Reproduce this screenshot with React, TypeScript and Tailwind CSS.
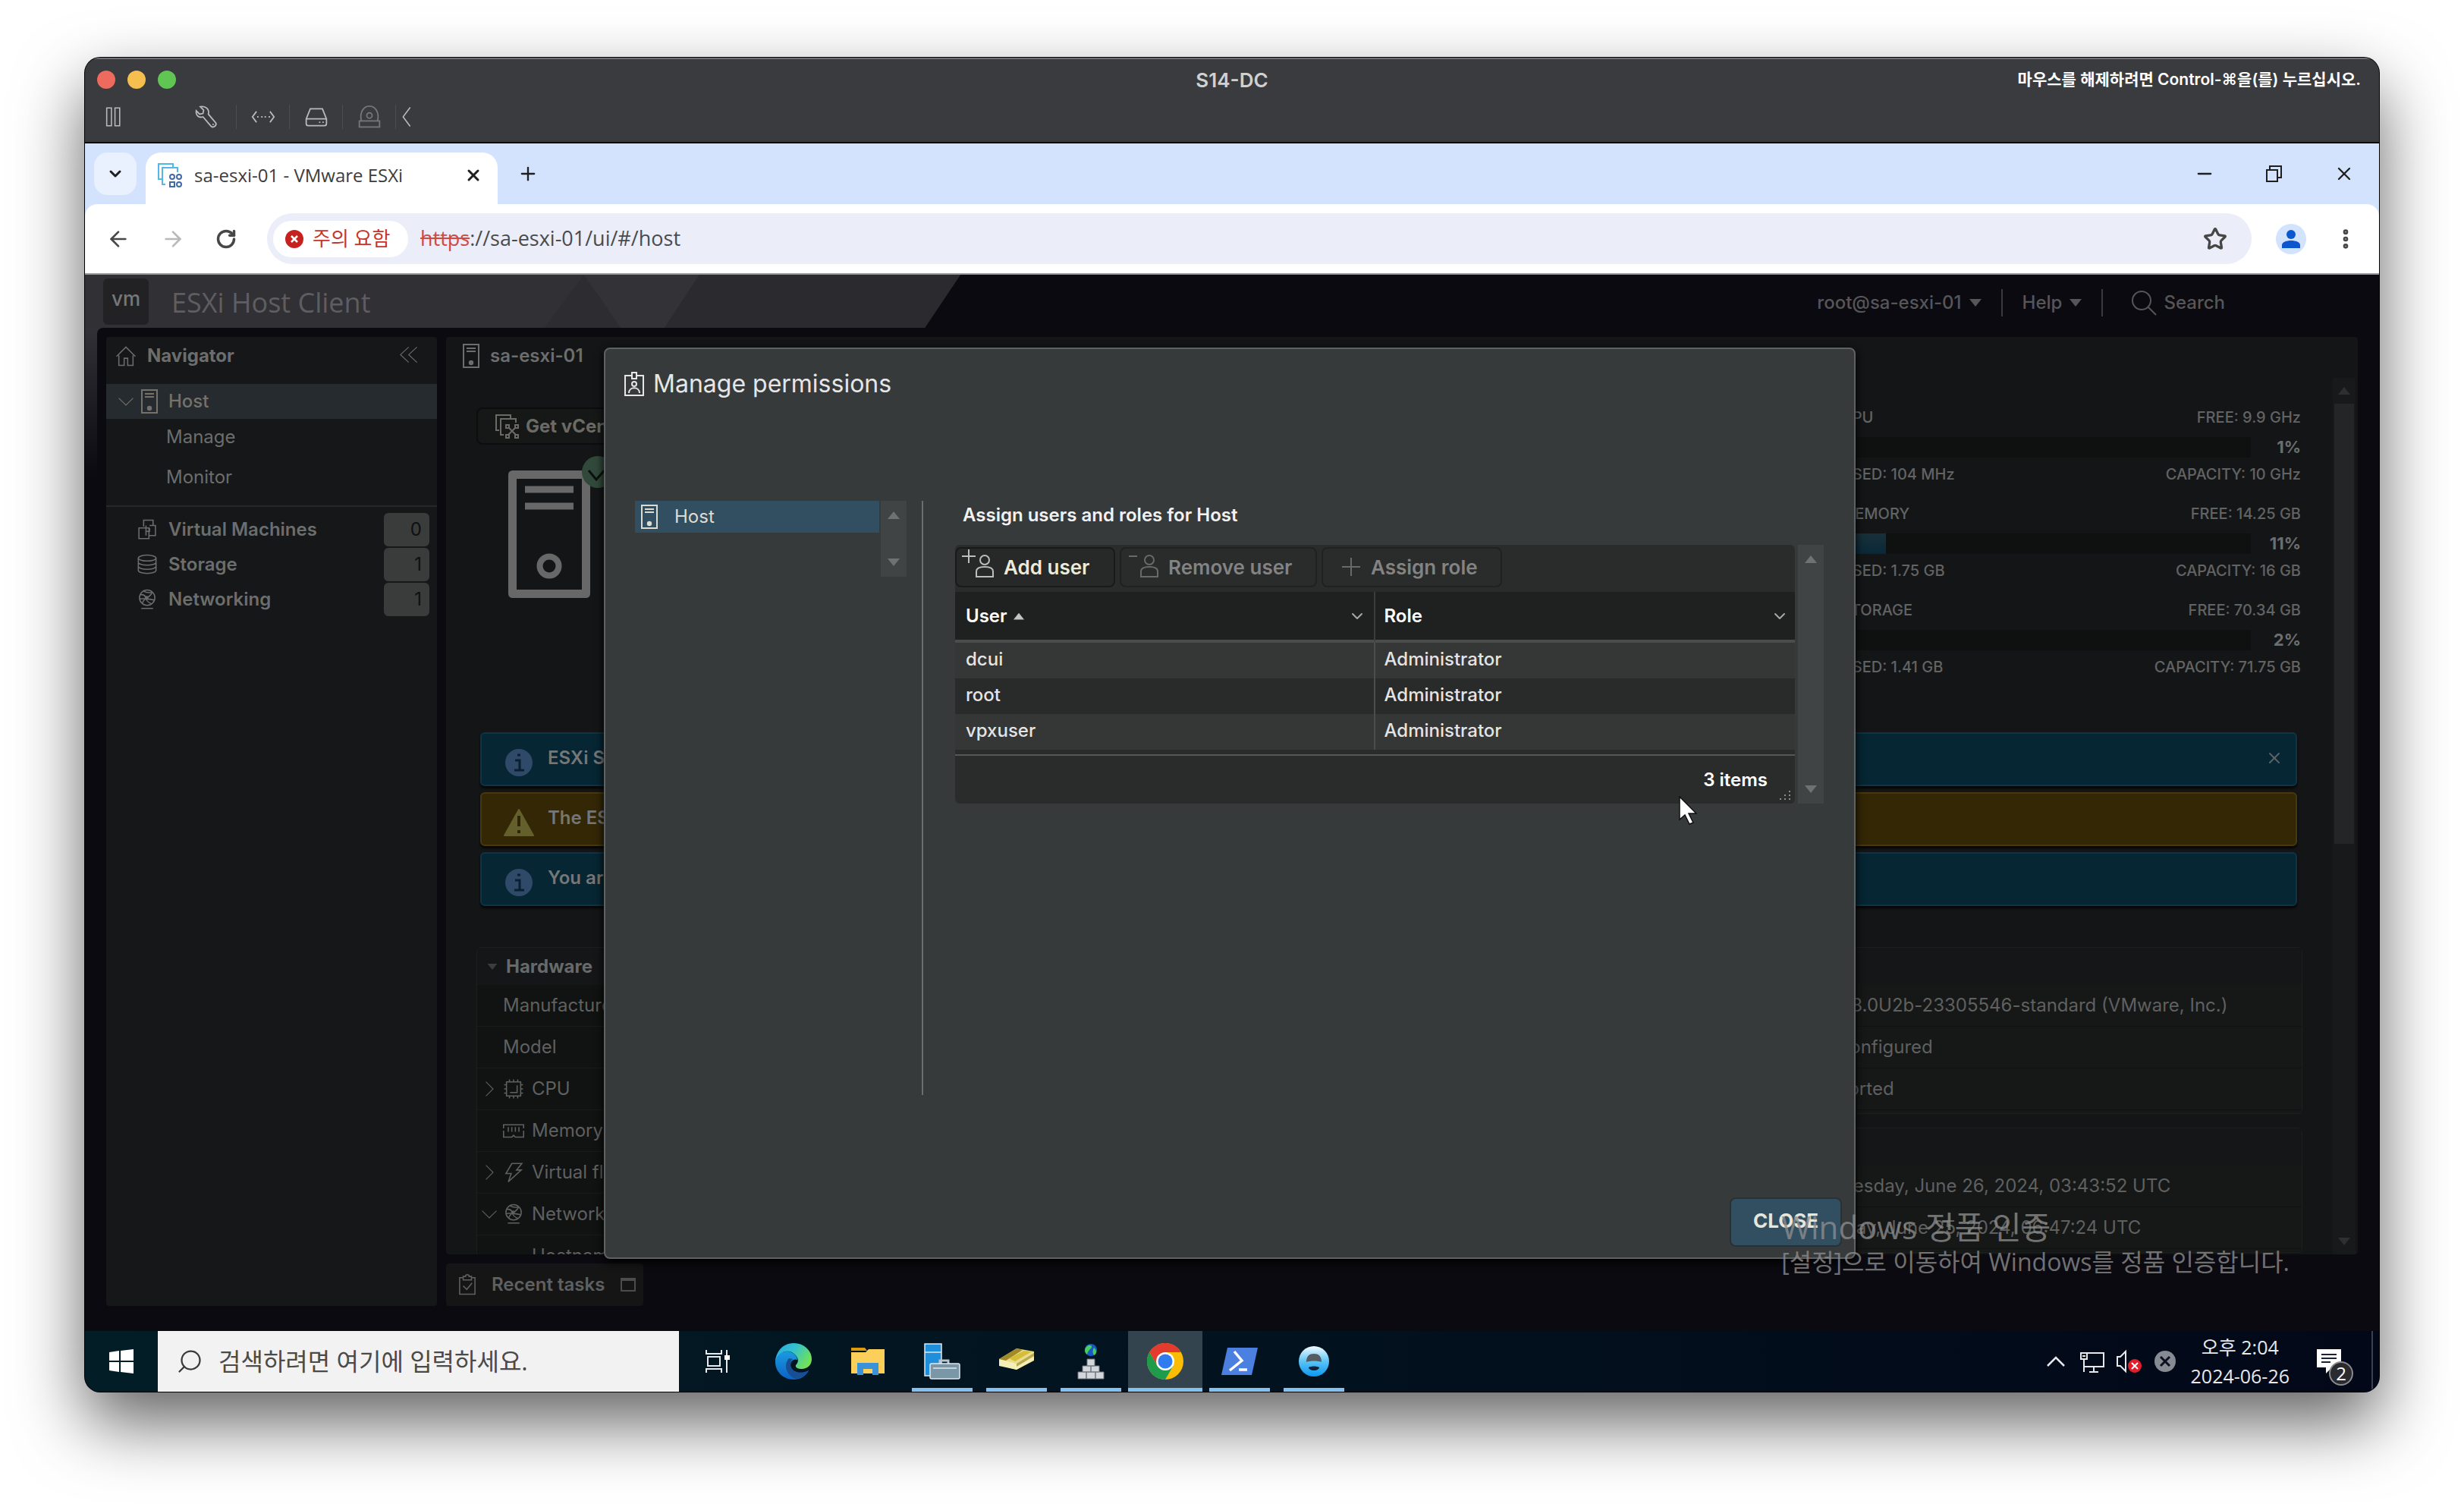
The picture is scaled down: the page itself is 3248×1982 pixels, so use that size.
import type { ReactNode } from "react";
import {
  ArrowLeft,
  ArrowRight,
  ChevronDown,
  EllipsisVertical,
  Minus,
  Plus,
  RotateCw,
  Search,
  Star,
  X,
} from "lucide-react";

const alerts = [
  { kind: "info", text: "ESXi Shell is enabled on this host. You should disable the shell unless it is necessary.", closable: true },
  { kind: "warn", text: "The ESXi host has no persistent storage configured for logs.", closable: false },
  { kind: "info", text: "You are currently using ESXi in evaluation mode.", closable: false },
];

const stats = [
  { label: "CPU", free: "FREE: 9.9 GHz", used: "USED: 104 MHz", capacity: "CAPACITY: 10 GHz", percent: 1 },
  { label: "MEMORY", free: "FREE: 14.25 GB", used: "USED: 1.75 GB", capacity: "CAPACITY: 16 GB", percent: 11 },
  { label: "STORAGE", free: "FREE: 70.34 GB", used: "USED: 1.41 GB", capacity: "CAPACITY: 71.75 GB", percent: 2 },
];

const users = [
  { user: "dcui", role: "Administrator" },
  { user: "root", role: "Administrator" },
  { user: "vpxuser", role: "Administrator" },
];

type IconProps = { className?: string; width?: number; children: ReactNode };

function Icon({ className = "size-7", width = 2, children }: IconProps) {
  return (
    <svg
      className={`shrink-0 ${className}`}
      viewBox="0 0 36 36"
      fill="none"
      stroke="currentColor"
      strokeWidth={width}
      aria-hidden="true"
    >
      {children}
    </svg>
  );
}

function HostIcon({ className = "h-8 w-[22px]" }: { className?: string }) {
  return (
    <svg className={`shrink-0 ${className}`} viewBox="0 0 22 32" fill="none" stroke="currentColor" strokeWidth="2">
      <rect x="1" y="1" width="20" height="30" />
      <path d="M5 6h12M5 10h12" />
      <circle cx="11" cy="25" r="2.2" fill="currentColor" />
    </svg>
  );
}

function VmIcon() {
  return (
    <Icon>
      <path d="M12 13V2h16v9M4 15h17v18H4zM22 11h10v17H21M16 11v9M16 28v-7h6v-6" />
    </Icon>
  );
}

function StorageIcon() {
  return (
    <Icon>
      <ellipse cx="18" cy="7" rx="15" ry="5" />
      <path d="M3 7v21c0 3 7 5 15 5s15-2 15-5V7M3 14c0 3 7 5 15 5s15-2 15-5M3 21c0 3 7 5 15 5s15-2 15-5" />
    </Icon>
  );
}

function NetworkIcon() {
  return (
    <Icon>
      <circle cx="18" cy="15" r="13" />
      <path d="M8 33h20M6 10c6-1 9 2 10 6s5 8 9 9M12 4c3 2 8 3 15 2M10 25c0-7 8-9 12-13s4-6 4-6M5 17c5-1 18 0 25 2" />
      <circle cx="17" cy="15" r="2" fill="currentColor" />
    </Icon>
  );
}

function Triangle({ up = false, className = "" }: { up?: boolean; className?: string }) {
  return (
    <svg className={`shrink-0 ${className}`} viewBox="0 0 16 10" fill="currentColor" aria-hidden="true">
      <path d={up ? "M0 10L8 0l8 10z" : "M0 0h16L8 10z"} />
    </svg>
  );
}

function Chevron({ open = false }: { open?: boolean }) {
  return (
    <Icon className="size-5">
      <path d={open ? "M1 10l17 17L35 10" : "M10 1l17 17L10 35"} />
    </Icon>
  );
}

function TitleBar() {
  return (
    <div className="h-[113px] border-t-2 border-b-2 border-t-[#6f7072] border-b-black bg-[#3a3b3e] font-[Inter,'Noto_Sans_CJK_KR',sans-serif]">
      <div className="grid h-[54px] grid-cols-3 items-center px-4">
        <div className="flex gap-4">
          <button aria-label="Close" className="size-6 rounded-full bg-[#ed6a5e]" />
          <button aria-label="Minimize" className="size-6 rounded-full bg-[#f5bf4f]" />
          <button aria-label="Zoom" className="size-6 rounded-full bg-[#61c554]" />
        </div>
        <div className="text-center text-[26px] font-semibold text-[#d0d0d1]">S14-DC</div>
        <div className="pr-2 text-right text-[21px] font-semibold whitespace-nowrap text-white">
          마우스를 해제하려면 Control-⌘을(를) 누르십시오.
        </div>
      </div>
      <div className="flex h-11 items-center pl-6 text-[#b9babb]">
        <Icon className="size-7" width={2}>
          <path d="M6 3h8v30H6zM20 3h8v30h-8z" />
        </Icon>
        <div className="w-[69px]" />
        <div className="flex w-[79px] items-center justify-center border-r border-[#4c4d50]">
          <Icon className="size-8" width={2}>
            <path d="M9 3l5 5-1 5-5 1-5-5c-1 7 4 11 10 9l12 14c3 3 9-1 7-5L21 14C23 7 17 1 9 3zM27 29h2" />
          </Icon>
        </div>
        <div className="flex w-[70px] items-center justify-center border-r border-[#4c4d50]">
          <Icon className="size-8" width={2}>
            <path d="M8 10l-6 8 6 8M28 10l6 8-6 8" />
            <path d="M9 18h2M15 18h2M20 18h2M26 18h2" />
          </Icon>
        </div>
        <div className="flex w-[70px] items-center justify-center border-r border-[#4c4d50]">
          <Icon className="size-8" width={2}>
            <path d="M9 6h18l6 15v7c0 2-1 3-3 3H6c-2 0-3-1-3-3v-7zM3 21h30M22 26h2M27 26h2" />
          </Icon>
        </div>
        <div className="flex w-[70px] items-center justify-center border-r border-[#4c4d50] text-[#77787b]">
          <Icon className="size-8" width={2}>
            <path d="M3 24h30v9H3zM6 24c-3-12 3-22 12-22s15 10 12 22" />
            <circle cx="18" cy="16" r="4" />
          </Icon>
        </div>
        <Icon className="size-7" width={2}>
          <path d="M24 2L12 18l12 16" />
        </Icon>
      </div>
    </div>
  );
}

function BrowserTabs() {
  return (
    <div className="flex h-20 items-end bg-[#d3e3fd] pl-3 text-[#1f1f1f]">
      <button aria-label="Search tabs" className="mb-3 grid size-14 place-items-center rounded-[18px] bg-[#e9f1fe]">
        <ChevronDown className="size-6" strokeWidth={3} />
      </button>
      <div className="ml-3 flex h-[68px] w-[464px] items-center rounded-t-[20px] bg-white pr-5 pb-2 pl-4">
        <svg className="size-8" viewBox="0 0 32 32" fill="none" strokeWidth="2">
          <path d="M5 21H1V1h19v4M10 28H6V6h20v6" stroke="#55b7e6" />
          <g stroke="#4568a8">
            <circle cx="19" cy="18" r="3" />
            <circle cx="28" cy="18" r="3" />
            <rect x="16" y="25" width="6" height="6" />
            <circle cx="28" cy="28" r="3" />
          </g>
        </svg>
        <span className="ml-4 flex-1 text-[24px] text-[#3c3c3c]">sa-esxi-01 - VMware ESXi</span>
        <button aria-label="Close tab">
          <X className="size-6" strokeWidth={3} />
        </button>
      </div>
      <button aria-label="New tab" className="mb-[26px] ml-[26px]">
        <Plus className="size-7" />
      </button>
      <div className="mb-[26px] ml-auto flex items-center gap-16 pr-8">
        <button aria-label="Minimize window">
          <Minus className="size-7" />
        </button>
        <button aria-label="Restore window">
          <svg className="size-7" viewBox="0 0 28 28" fill="none" stroke="currentColor" strokeWidth="2">
            <path d="M4 9h14v15H4zM8 8V4h15v15h-4" />
          </svg>
        </button>
        <button aria-label="Close window">
          <X className="size-7" strokeWidth={2} />
        </button>
      </div>
    </div>
  );
}

function AddressBar() {
  return (
    <div className="bg-[#d3e3fd]">
      <div className="flex h-[93px] items-center rounded-t-[16px] border-b-2 border-[#9a9a9c] bg-white pr-7 pl-7">
        <button aria-label="Back" className="text-[#474747]">
          <ArrowLeft className="size-8" />
        </button>
        <button aria-label="Forward" className="ml-10 text-[#b9b9b9]">
          <ArrowRight className="size-8" />
        </button>
        <button aria-label="Reload" className="ml-10 text-[#474747]">
          <RotateCw className="size-7" strokeWidth={3} />
        </button>
        <div className="ml-10 flex h-[67px] flex-1 items-center rounded-full bg-[#ebeef8] pr-8 pl-2">
          <button className="flex h-12 w-[178px] items-center gap-3 rounded-full bg-white pl-4 text-[26px] text-[#c5372c]">
            <svg className="size-6" viewBox="0 0 24 24">
              <circle cx="12" cy="12" r="12" fill="#c5221f" />
              <path d="M8 8l8 8M16 8l-8 8" stroke="#fff" strokeWidth="2.5" />
            </svg>
            주의 요함
          </button>
          <div className="ml-4 flex-1 text-[27px] text-[#4a4b4e]">
            <span className="text-[#d04a44] line-through">https</span>://sa-esxi-01/ui/#/host
          </div>
          <button aria-label="Bookmark" className="text-[#474747]">
            <Star className="size-8" strokeWidth={2.5} />
          </button>
        </div>
        <button aria-label="Profile" className="ml-8">
          <svg className="size-10" viewBox="0 0 40 40" fill="#0b57d0">
            <circle cx="20" cy="20" r="20" fill="#d3e3fd" />
            <circle cx="20" cy="14" r="6" />
            <path d="M8 32v-4c0-4 6-6 12-6s12 2 12 6v4z" />
          </svg>
        </button>
        <button aria-label="Menu" className="ml-9 text-[#474747]">
          <EllipsisVertical className="size-8" strokeWidth={3} />
        </button>
      </div>
    </div>
  );
}

function ClientHeader() {
  return (
    <header className="relative flex h-[70px] items-center bg-[#0b0a10] pr-[203px] pl-6">
      <svg className="absolute top-0 left-0 h-full w-[1154px]" viewBox="0 0 1154 71" preserveAspectRatio="none">
        <path d="M0 0h1154l-47 71H0z" fill="#313035" />
        <path d="M658 0l-52 71h100z" fill="#2d2c31" />
        <path d="M658 0h152l-46 71h-58z" fill="#333237" />
        <path d="M810 0h344l-47 71H764z" fill="#2b2a2e" />
      </svg>
      <div className="relative grid h-[61px] w-[60px] place-items-center rounded-md bg-[#222225] pb-2 text-[26px] font-medium text-[#77777a]">
        vm
      </div>
      <h1 className="relative ml-[30px] pt-1 font-['Open_Sans'] text-[36px] text-[#5e5e62]">ESXi Host Client</h1>
      <div className="ml-auto flex items-center pt-1 text-[24px] font-medium text-[#565658]">
        <button className="flex items-center gap-2.5">
          root@sa-esxi-01 <Triangle className="h-2.5 w-4" />
        </button>
        <div className="mx-[26px] h-9 w-0.5 bg-[#3a3a3e]" />
        <button className="flex items-center gap-2.5">
          Help <Triangle className="h-2.5 w-4" />
        </button>
        <div className="mr-9 ml-[26px] h-9 w-0.5 bg-[#3a3a3e]" />
        <button className="flex items-center gap-2">
          <Icon className="size-9">
            <circle cx="15" cy="15" r="12" />
            <path d="M24 24l10 10" />
          </Icon>
          Search
        </button>
      </div>
    </header>
  );
}

function Navigator() {
  const items = [
    { name: "Virtual Machines", count: 0, icon: <VmIcon /> },
    { name: "Storage", count: 1, icon: <StorageIcon /> },
    { name: "Networking", count: 1, icon: <NetworkIcon /> },
  ];
  return (
    <nav className="w-[436px] shrink-0 rounded-sm bg-[#151718] text-[24px] text-[#6c6d6d]">
      <div className="mb-3 flex h-[50px] items-center pr-6 pl-3">
        <Icon>
          <path d="M2 19L18 3l16 16M6 17v17h9V22h6v12h9V17" />
        </Icon>
        <span className="ml-3.5 flex-1 font-bold">Navigator</span>
        <button aria-label="Collapse">
          <Icon className="size-7" width={1.5}>
            <path d="M19 3L5 16l14 13M33 3L19 16l14 13" />
          </Icon>
        </button>
      </div>
      <a href="#/host" className="flex h-[46px] items-center bg-[#252b2f] pl-4 font-medium text-[#74726a]">
        <Chevron open />
        <HostIcon className="mr-3.5 ml-2.5 h-8 w-[22px]" />
        Host
      </a>
      <a href="#/host/manage" className="flex h-12 items-center pl-[79px]">
        Manage
      </a>
      <a href="#/host/monitor" className="flex h-[58px] items-center pl-[79px]">
        Monitor
      </a>
      <div className="mt-2 mb-2 h-0.5 bg-[#26282a]" />
      <div className="flex flex-col gap-0.5">
        {items.map((item) => (
          <a key={item.name} href="#/host" className="flex h-11 items-center pr-2.5 pl-10 font-semibold">
            {item.icon}
            <span className="ml-3.5 flex-1">{item.name}</span>
            <span className="flex h-11 w-[60px] items-center justify-end rounded-md bg-[#3a3b3b] pr-2.5 font-normal text-[#0f1010]">
              {item.count}
            </span>
          </a>
        ))}
      </div>
    </nav>
  );
}

function ResourceStats() {
  return (
    <div className="flex w-[606px] flex-col gap-[22px] pt-[37px] text-[20px] font-medium text-[#626363]">
      {stats.map((s) => (
        <div key={s.label}>
          <div className="flex h-[30px] items-center justify-between">
            <span>{s.label}</span>
            <span>{s.free}</span>
          </div>
          <div className="mt-[11px] flex h-[27px] items-center">
            <div className="h-full flex-1 bg-[#0f1111]">
              <div
                className="h-full bg-linear-to-b from-[#193039] to-[#08283a]"
                style={{ width: `${s.percent}%` }}
              />
            </div>
            <span className="w-[66px] text-right text-[22px] font-bold text-[#6c6d6d]">{s.percent}%</span>
          </div>
          <div className="mt-[7px] flex h-[30px] items-center justify-between">
            <span>{s.used}</span>
            <span>{s.capacity}</span>
          </div>
        </div>
      ))}
    </div>
  );
}

function Alert({ kind, text, closable }: { kind: string; text: string; closable: boolean }) {
  const warn = kind === "warn";
  return (
    <div
      className={`flex h-[71px] items-center rounded-md border-2 pr-4 pl-[29px] shadow-[0_3px_3px_#050607] ${
        warn ? "border-[#463a0d] bg-[#332706]" : "border-[#0d3546] bg-[#062633]"
      }`}
    >
      {warn ? (
        <svg className="mt-2 h-9 w-10 shrink-0" viewBox="0 0 40 36">
          <path d="M20 1L39 35H1z" fill="#64602c" stroke="#64602c" strokeWidth="2" strokeLinejoin="round" />
          <path d="M20 9v14M20 28v4" stroke="#2f2406" strokeWidth="4" />
        </svg>
      ) : (
        <svg className="mt-2 h-9 w-10 shrink-0" viewBox="0 0 40 36">
          <circle cx="20" cy="18" r="18" fill="#2f4a68" />
          <path d="M15 15h6v12M14 28h13M18 8h4" stroke="#0a1f30" strokeWidth="3" fill="none" />
        </svg>
      )}
      <span className="ml-[18px] flex-1 pb-1 text-[24px] font-semibold text-[#757777]">{text}</span>
      {closable && (
        <button aria-label="Dismiss" className="pb-1 text-[#5b6366]">
          <X className="size-6" strokeWidth={2} />
        </button>
      )}
    </div>
  );
}

function HardwareRow({ chevron, icon, children }: { chevron?: ReactNode; icon?: ReactNode; children: ReactNode }) {
  return (
    <div className="flex h-[55px] items-center border-b border-[#191a1a] pl-1.5">
      <div className="mr-2 w-5">{chevron}</div>
      {icon && <div className="mr-2.5">{icon}</div>}
      {children}
    </div>
  );
}

function ConfigCard({ title, rows }: { title: string; rows: string[][] }) {
  return (
    <div className="rounded-md border border-[#1d1f1f] bg-[#161717] pb-1">
      <div className="flex h-[49px] items-center gap-2.5 bg-[#151617] pl-3 font-semibold">
        <Triangle className="h-2 w-4 text-[#3c3d3d]" /> {title}
      </div>
      {rows.map(([label, value]) => (
        <div key={label} className="flex h-[55px] items-center border-b border-[#101111] pl-[35px]">
          <span className="w-[498px]">{label}</span>
          <span className="whitespace-nowrap">{value}</span>
        </div>
      ))}
    </div>
  );
}

function HostSummary() {
  return (
    <main className="flex min-h-0 flex-1 flex-col rounded-sm bg-[#141516] text-[24px] text-[#5f6060]">
      <div className="flex h-[54px] items-center pb-1 pl-[22px] font-semibold text-[#6c6d6d]">
        <HostIcon />
        <span className="ml-3.5">sa-esxi-01</span>
      </div>
      <div className="flex min-h-0 flex-1">
        <div className="min-w-0 flex-1 overflow-hidden">
          <div className="flex h-[467px] justify-between pr-[42px] pl-10">
            <div className="pt-[39px]">
              <button className="flex h-[49px] items-center gap-2 rounded-lg border-2 border-[#0c0d0d] bg-[#161717] px-[23px] font-bold text-[#6b6a64]">
                <svg className="size-8" viewBox="0 0 32 32" fill="none" stroke="currentColor" strokeWidth="2">
                  <path d="M5 21H1V1h19v4M11 27H7V6h20v5M17 17l10 10M27 17L17 27" />
                  <path d="M14 14h4v4h-4zM26 14h4v4h-4zM14 27h4v4h-4zM26 27h4v4h-4z" />
                </svg>
                Get vCenter Server
              </button>
              <svg className="-mt-2.5 ml-[42px] h-[212px] w-40" viewBox="0 0 160 212" fill="none" stroke="#686868">
                <path d="M5.500 49.500h97v157h-97z" strokeWidth="11" strokeLinejoin="round" />
                <path d="M22 69h64M22 91h64" strokeWidth="9" />
                <circle cx="54" cy="170" r="12.500" strokeWidth="8" />
                <circle cx="118" cy="46" r="21" fill="#31493a" stroke="none" />
                <path d="M106 44l10 12 16-18" stroke="#0c100e" strokeWidth="3" />
              </svg>
            </div>
            <ResourceStats />
          </div>
          <div className="mr-[47px] ml-[45px] flex flex-col gap-2">
            {alerts.map((a) => (
              <Alert key={a.text} {...a} />
            ))}
          </div>
          <div className="mt-[54px] mr-10 ml-10 grid grid-cols-2 gap-6">
            <div className="rounded-t-md border border-[#1d1f1f] bg-[#111212]">
              <div className="flex h-[49px] items-center gap-2.5 bg-[#151617] pl-3 font-bold text-[#686969]">
                <Triangle className="h-2 w-4 text-[#3c3d3d]" /> Hardware
              </div>
              <HardwareRow>Manufacturer</HardwareRow>
              <HardwareRow>Model</HardwareRow>
              <HardwareRow
                chevron={<Chevron />}
                icon={
                  <Icon>
                    <path d="M6 6h24v24H6zM24 12v12H12M11 2v4M18 2v4M25 2v4M11 30v4M18 30v4M25 30v4M2 11h4M2 18h4M2 25h4M30 11h4M30 18h4M30 25h4" />
                  </Icon>
                }
              >
                CPU
              </HardwareRow>
              <HardwareRow
                icon={
                  <Icon>
                    <path d="M1 14V8h34v6M1 18v11h14l3-3 3 3h14V18M9 12v8M15 12v8M21 12v8M27 12v8" />
                  </Icon>
                }
              >
                Memory
              </HardwareRow>
              <HardwareRow
                chevron={<Chevron />}
                icon={
                  <Icon>
                    <path d="M15 3h17l-9 11h8L9 34l5-14H5z" />
                  </Icon>
                }
              >
                Virtual flash
              </HardwareRow>
              <HardwareRow chevron={<Chevron open />} icon={<NetworkIcon />}>
                Networking
              </HardwareRow>
              <HardwareRow icon={<div className="w-7" />}>Hostname</HardwareRow>
            </div>
            <div className="flex flex-col gap-[18px]">
              <ConfigCard
                title="Configuration"
                rows={[
                  ["Image profile", "ESXi-8.0U2b-23305546-standard (VMware, Inc.)"],
                  ["vSphere HA state", "Not configured"],
                  ["vMotion", "Supported"],
                ]}
              />
              <ConfigCard
                title="System Information"
                rows={[
                  ["Date/time on host", "Wednesday, June 26, 2024, 03:43:52 UTC"],
                  ["Install date", "Tuesday, June 25, 2024, 06:47:24 UTC"],
                ]}
              />
            </div>
          </div>
        </div>
        <div className="mr-[3px] flex w-[30px] flex-col items-center bg-[#18191b] text-[#2e2f30]">
          <div className="flex h-[34px] items-center">
            <Triangle up className="h-2.5 w-4" />
          </div>
          <div className="h-[580px] w-[26px] bg-[#242526]" />
          <Triangle className="mt-auto mb-3 h-2.5 w-4" />
        </div>
      </div>
    </main>
  );
}

function Grid() {
  return (
    <div className="flex gap-1">
      <div className="flex-1 rounded-md bg-[#2a2b2b]">
        <div className="flex h-[62px] items-center gap-1.5 pb-1 text-[26px] font-semibold text-[#838383]">
          <button className="flex h-[53px] w-[211px] items-center gap-3 rounded-lg border-2 border-[#191a1a] bg-[#272828] pl-1.5 text-[#eeead8]">
            <svg className="mb-1 h-11 w-[44px] text-[#bdbdbd]" viewBox="0 0 44 44" fill="none" stroke="currentColor" strokeWidth="2">
              <path d="M1 10h18M10 1v18" />
              <circle cx="31" cy="15" r="6" />
              <path d="M20 37v-7c0-4 4-6 11-6s11 2 11 6v7z" />
            </svg>
            Add user
          </button>
          <button disabled className="flex h-[53px] w-[260px] items-center gap-3 rounded-lg border-2 border-[#202121] pl-1.5">
            <svg className="mb-1 h-11 w-[44px] text-[#686969]" viewBox="0 0 44 44" fill="none" stroke="currentColor" strokeWidth="2">
              <path d="M4 10h11" />
              <circle cx="31" cy="15" r="6" />
              <path d="M20 37v-7c0-4 4-6 11-6s11 2 11 6v7z" />
            </svg>
            Remove user
          </button>
          <button disabled className="flex h-[53px] w-[238px] items-center gap-[14px] rounded-lg border-2 border-[#202121] pl-[25px]">
            <svg className="size-6 text-[#686969]" viewBox="0 0 24 24" stroke="currentColor" strokeWidth="2">
              <path d="M0 12h24M12 0v24" />
            </svg>
            Assign role
          </button>
        </div>
        <table className="w-full table-fixed border-separate border-spacing-0 text-left text-[24px] font-medium text-[#e4e4e4]">
          <thead className="bg-[#1f2020] text-white">
            <tr>
              <th className="h-[67px] border-r-2 border-b-4 border-r-[#3b3c3c] border-b-[#4b4c4c] pr-2.5 pl-3.5 font-semibold">
                <div className="flex items-center gap-2">
                  User <Triangle up className="h-3 w-3.5 text-[#c4c4c4]" />
                  <ChevronDown className="ml-auto size-6 text-[#a8a8a8]" />
                </div>
              </th>
              <th className="h-[67px] border-b-4 border-b-[#4b4c4c] pr-2 pl-3 font-semibold">
                <div className="flex items-center">
                  Role
                  <ChevronDown className="ml-auto size-6 text-[#a8a8a8]" />
                </div>
              </th>
            </tr>
          </thead>
          <tbody>
            {users.map((u) => (
              <tr key={u.user} className="odd:bg-[#353636] even:bg-[#292a2a]">
                <td className="h-[47px] border-r-2 border-[#4b4c4c] pb-1 pl-3.5">{u.user}</td>
                <td className="h-[47px] pb-1 pl-3">{u.role}</td>
              </tr>
            ))}
          </tbody>
        </table>
        <div className="mt-1.5 flex h-[65px] items-center justify-end gap-4 border-t-2 border-[#555656] pr-1.5">
          <span className="text-[24px] font-semibold text-white">3 items</span>
          <svg className="mb-1 size-3.5 self-end" viewBox="0 0 14 14" fill="#8b8b8b">
            <path d="M0 11h2v2H0zM6 11h2v2H6zM12 11h2v2h-2zM6 6h2v2H6zM12 6h2v2h-2zM12 1h2v2h-2z" />
          </svg>
        </div>
      </div>
      <div className="flex w-[34px] flex-col items-center justify-between bg-[#414445] py-3.5 text-[#6f7273]">
        <Triangle up className="h-2.5 w-4" />
        <Triangle className="h-2.5 w-4" />
      </div>
    </div>
  );
}

function PermissionsDialog() {
  return (
    <div className="absolute inset-0 flex justify-center pt-24 pr-1.5 pb-[95px]">
      <div
        role="dialog"
        aria-labelledby="dialog-title"
        className="flex w-[1650px] flex-col rounded-lg border-2 border-[#5f6263] bg-[#373a3b] shadow-[0_4px_12px_#000]"
      >
        <div className="flex h-[92px] items-center pl-[25px] text-[#e6e6e6]">
          <svg className="h-8 w-[26px]" viewBox="0 0 26 32" fill="none" stroke="currentColor" strokeWidth="2">
            <path d="M9 5H1v26h24V5h-8M10 1h6v8h-6z" />
            <circle cx="13" cy="16" r="3" />
            <path d="M6 28c0-9 14-9 14 0" />
          </svg>
          <h2 id="dialog-title" className="ml-3 text-[32px]">
            Manage permissions
          </h2>
        </div>
        <div className="mb-[135px] flex flex-1 pt-[108px] pr-10 pl-[39px]">
          <div className="mr-5 flex items-start gap-0.5">
            <button className="flex h-[42px] w-[322px] items-center gap-[22px] bg-[#324f61] pl-2 text-[24px] text-[#dcdcd2]">
              <HostIcon />
              Host
            </button>
            <div className="flex h-[100px] w-[34px] flex-col items-center justify-between bg-[#414445] py-3.5 text-[#6f7273]">
              <Triangle up className="h-2.5 w-4" />
              <Triangle className="h-2.5 w-4" />
            </div>
          </div>
          <div className="flex-1 border-l-2 border-[#6a6d6e] pl-[42px]">
            <h3 className="mb-5 flex h-[38px] items-center pl-2.5 text-[24px] font-semibold text-[#f2f2f2]">
              Assign users and roles for Host
            </h3>
            <Grid />
          </div>
        </div>
        <div className="flex justify-end pr-4 pb-3.5">
          <button className="h-[65px] w-[148px] rounded-lg border-2 border-[#2a3135] bg-[#324f61] pb-1 text-[26px] font-bold text-[#e8e6da]">
            CLOSE
          </button>
        </div>
      </div>
    </div>
  );
}

function Taskbar() {
  const apps = [
    {
      name: "Edge",
      running: false,
      icon: (
        <svg className="size-12" viewBox="0 0 48 48">
          <defs>
            <linearGradient id="edgeTop" x1="0" x2="1" y1="0" y2="0.500">
              <stop offset="0" stopColor="#2aa9e0" />
              <stop offset="0.500" stopColor="#33c1d0" />
              <stop offset="1" stopColor="#6fe05a" />
            </linearGradient>
            <linearGradient id="edgeBody" x1="0" x2="0" y1="0" y2="1">
              <stop offset="0" stopColor="#1b9be0" />
              <stop offset="1" stopColor="#0b62c4" />
            </linearGradient>
          </defs>
          <path d="M0 25C0 14 8 11 15 11c9 0 14 6 14 11-4-2-9 1-9 7 0 9 11 14 24 7-4 8-11 12-20 12C10 48 0 37 0 25z" fill="url(#edgeBody)" />
          <path d="M18 20c-7 7-5 22 9 27 8-1 14-5 17-11-12 6-24 1-24-8 0-3 1-5 3-7z" fill="#174f95" />
          <path d="M0 24C1 10 11 0 24 0c14 0 24 10 24 21 0 8-6 13-13 13-5 0-9-2-8-5 4-4 4-9-1-14-7-7-22-6-26 9z" fill="url(#edgeTop)" />
        </svg>
      ),
    },
    {
      name: "File Explorer",
      running: false,
      icon: (
        <svg className="h-9 w-11" viewBox="0 0 44 36">
          <path d="M0 0h18l3 4H0z" fill="#dc9a10" />
          <path d="M0 6h19l4-4h21v32H0z" fill="#fbcf5a" />
          <path d="M8 20h28v16h-8v-8H16v8H8z" fill="#3a93d8" />
        </svg>
      ),
    },
    {
      name: "Server Manager",
      running: true,
      icon: (
        <svg className="size-12" viewBox="0 0 48 48" stroke="#dfe9ef" strokeWidth="1.500">
          <path d="M1 1h22v42H1zM1 12h22" fill="#1f8edb" />
          <path d="M21 28v-5h11v5" fill="none" stroke="#b7c6cf" strokeWidth="3" />
          <rect x="8" y="27" width="39" height="20" rx="2" fill="#7a97a8" />
          <path d="M12 33h31" />
        </svg>
      ),
    },
    {
      name: "DNS",
      running: true,
      icon: (
        <svg className="size-12" viewBox="0 0 48 48">
          <path d="M1 21L24 7l23 4v12L24 35 1 29z" fill="#e8dd8a" />
          <path d="M1 21l23 6v8L1 30zM24 27l23-14v9L24 35z" fill="#f4edb5" />
          <path d="M1 21L24 7l8 2L10 23z" fill="#a08a2a" />
          <path d="M14 20l20-10 10 1-22 13z" fill="#d6bd37" />
          <path d="M24 27l23-14v4L24 31z" fill="#b9a951" />
        </svg>
      ),
    },
    {
      name: "Active Directory",
      running: true,
      icon: (
        <svg className="size-12" viewBox="0 0 48 48">
          <circle cx="24" cy="9" r="8" fill="#1858c9" />
          <path d="M19 4c4-3 8 0 5 3s-4 4-5 8c-4-3-4-8 0-11zM28 6c4 3 4 8 0 10-2-3-2-6 0-10z" fill="#48cf58" />
          <g fill="#d3d6db" stroke="#6f7680">
            <path d="M19 21h10v9H19zM13 30h11v8H13zM24 30h11v8H24zM7 38h11v9H7zM18 38h12v9H18zM30 38h11v9H30z" />
          </g>
        </svg>
      ),
    },
    {
      name: "Chrome",
      running: true,
      icon: (
        <svg className="size-12" viewBox="0 0 48 48">
          <circle cx="24" cy="24" r="24" fill="#fbbc05" />
          <path d="M3.200 12A24 24 0 0 1 44.800 12H24L13.600 30z" fill="#e33b2e" />
          <path d="M3.200 12A24 24 0 0 0 24 48l10.400-18H13.600z" fill="#1e9c4b" />
          <circle cx="24" cy="24" r="12" fill="#fff" />
          <circle cx="24" cy="24" r="9.500" fill="#2f7bf0" />
        </svg>
      ),
    },
    {
      name: "PowerShell",
      running: true,
      icon: (
        <svg className="h-9 w-12" viewBox="0 0 48 36" fill="none">
          <path d="M8 0h40l-8 36H0z" fill="#4c80e0" />
          <path d="M17 5l10 12L11 30M23 29h11" stroke="#fff" strokeWidth="3.500" />
        </svg>
      ),
    },
    {
      name: "Assistant",
      running: true,
      icon: (
        <svg className="size-10" viewBox="0 0 40 40">
          <defs>
            <linearGradient id="agent" x1="0" x2="0" y1="0" y2="1">
              <stop offset="0" stopColor="#f3fbff" />
              <stop offset="0.500" stopColor="#5cc4f5" />
              <stop offset="1" stopColor="#0a97f2" />
            </linearGradient>
          </defs>
          <circle cx="20" cy="20" r="20" fill="url(#agent)" />
          <path d="M10 21c0-8 4-11 10-11s10 3 10 11c-4-2-16-2-20 0z" fill="#555b60" />
          <path d="M13 28c4-2 10-2 14 0 0 2-3 4-7 4s-7-2-7-4z" fill="#10253a" />
        </svg>
      ),
    },
  ];
  return (
    <footer className="flex h-20 items-stretch bg-linear-to-r from-[#021d26] to-[#020818] text-[25px] text-[#e6e8ec]">
      <button aria-label="Start" className="grid w-24 place-items-center">
        <svg className="size-8" viewBox="0 0 32 32" fill="#fff">
          <path d="M0 4l13-2v13H0zM15 2l17-2v15H15zM0 17h13v13L0 28zM15 17h17v15l-17-2z" />
        </svg>
      </button>
      <label className="flex w-[687px] items-center bg-[#f2f2f2] pl-6 text-[#3a3a3a]">
        <Search className="size-9 -scale-x-100" strokeWidth={1.5} />
        <input
          aria-label="검색"
          placeholder="검색하려면 여기에 입력하세요."
          className="ml-5 flex-1 bg-transparent text-[32px] placeholder:text-[#4a4a4a]"
        />
      </label>
      <button aria-label="Task View" className="grid w-[102px] place-items-center">
        <svg className="size-8" viewBox="0 0 32 32" fill="none" stroke="#e6eaec" strokeWidth="2">
          <path d="M1 1v5h20V1M3 10h16v12H3zM1 31v-5h20v5M28 1v30" />
          <path d="M25 8h7v6h-7z" fill="#fff" stroke="none" />
        </svg>
      </button>
      {apps.map((app) => (
        <button
          key={app.name}
          aria-label={app.name}
          className={`relative grid w-[98px] place-items-center ${app.name === "Chrome" ? "bg-[#33444f]" : ""}`}
        >
          {app.icon}
          {app.running && (
            <span
              className={`absolute bottom-0 h-[5px] bg-[#84c1ef] ${app.name === "Chrome" ? "inset-x-0" : "inset-x-[9px]"}`}
            />
          )}
        </button>
      ))}
      <div className="ml-auto flex items-center gap-4 pr-2">
        <svg className="h-4 w-6" viewBox="0 0 24 16" fill="none" stroke="currentColor" strokeWidth="2.5">
          <path d="M1 14L12 3l11 11" />
        </svg>
        <svg className="ml-1 size-8" viewBox="0 0 32 32" fill="none" stroke="currentColor" strokeWidth="2">
          <path d="M10 5h21v18H6M1 5h8v8H1zM5 13v17M18 23v6M12 30h12M3 9h4" />
        </svg>
        <svg className="h-8 w-[34px]" viewBox="0 0 34 32" fill="none" stroke="currentColor" strokeWidth="2">
          <path d="M1 10h4l7-7v26l-7-7H1z" />
          <circle cx="24" cy="22" r="9" fill="#e11f2b" stroke="none" />
          <path d="M20 18l8 8M28 18l-8 8" stroke="#fff" />
        </svg>
        <svg className="size-7" viewBox="0 0 28 28">
          <circle cx="14" cy="14" r="14" fill="#868a93" />
          <path d="M8 8l12 12M20 8L8 20" stroke="#0a1020" strokeWidth="3" />
        </svg>
        <div className="ml-1 text-center leading-[38px]">
          <div>오후 2:04</div>
          <div>2024-06-26</div>
        </div>
        <div className="relative mr-6 ml-5 size-8">
          <svg className="size-8" viewBox="0 0 32 32">
            <path d="M0 0h32v24H20l-8 8v-8H0z" fill="#fff" />
            <path d="M6 7h20M6 12h20M6 17h12" stroke="#1c2233" strokeWidth="2" />
          </svg>
          <span className="absolute -right-4 -bottom-4 grid size-8 place-items-center rounded-full border-2 border-[#8a8a8e] bg-[#2a2b2e] text-[24px] leading-none text-white">
            2
          </span>
        </div>
        <div className="h-full w-0.5 bg-[#3b4054]" />
      </div>
    </footer>
  );
}

export default function App() {
  return (
    <div className="h-screen overflow-hidden bg-white px-28 pt-[76px] pb-[148px]">
      <div className="flex h-full flex-col overflow-hidden rounded-[20px] bg-[#0b0a10] font-['Open_Sans','Noto_Sans_CJK_KR',sans-serif] shadow-[0_0_0_1px_#000,0_40px_90px_rgba(0,0,0,0.62)]">
        <TitleBar />
        <BrowserTabs />
        <AddressBar />
        <div className="relative flex min-h-0 flex-1 flex-col font-[Inter,'Noto_Sans_CJK_KR',sans-serif]">
          <ClientHeader />
          <div className="min-h-0 flex-1 bg-linear-to-b from-[#323137] to-[#0b0a10] to-15% pl-4">
            <div className="flex h-full gap-3 rounded-tl-lg bg-[#0b0a10] pt-3 pr-7 pb-[33px] pl-3">
              <Navigator />
              <div className="flex min-w-0 flex-1 flex-col gap-3">
                <HostSummary />
                <div className="flex h-14 w-[260px] items-center rounded-sm bg-[#151515] pl-3.5 text-[24px] font-semibold text-[#5f6060]">
                  <Icon>
                    <path d="M10 6H5v28h26V6h-5M11 4h4c0-4 6-4 6 0h4v6H11zM11 20l6 6 9-11" />
                  </Icon>
                  <span className="ml-[18px] whitespace-nowrap">Recent tasks</span>
                  <button aria-label="Restore recent tasks" className="mr-2.5 ml-auto h-[18px] w-5 border-2 border-t-4 border-[#4b4c4c]" />
                </div>
              </div>
            </div>
          </div>
          <PermissionsDialog />
          <svg className="absolute top-[687px] left-[2101px] h-[38px] w-6" viewBox="0 0 24 38">
            <path d="M1 1v30l7-6 6 12 5-2-6-12h10z" fill="#fff" stroke="#111" strokeWidth="1.5" />
          </svg>
          <div className="absolute right-[118px] bottom-[70px] font-['Open_Sans','Noto_Sans_CJK_KR',sans-serif] text-[#8d8d8d]/80">
            <div className="text-[42px] leading-[50px]">Windows 정품 인증</div>
            <div className="text-[32px] leading-[42px]">[설정]으로 이동하여 Windows를 정품 인증합니다.</div>
          </div>
        </div>
        <Taskbar />
      </div>
    </div>
  );
}
